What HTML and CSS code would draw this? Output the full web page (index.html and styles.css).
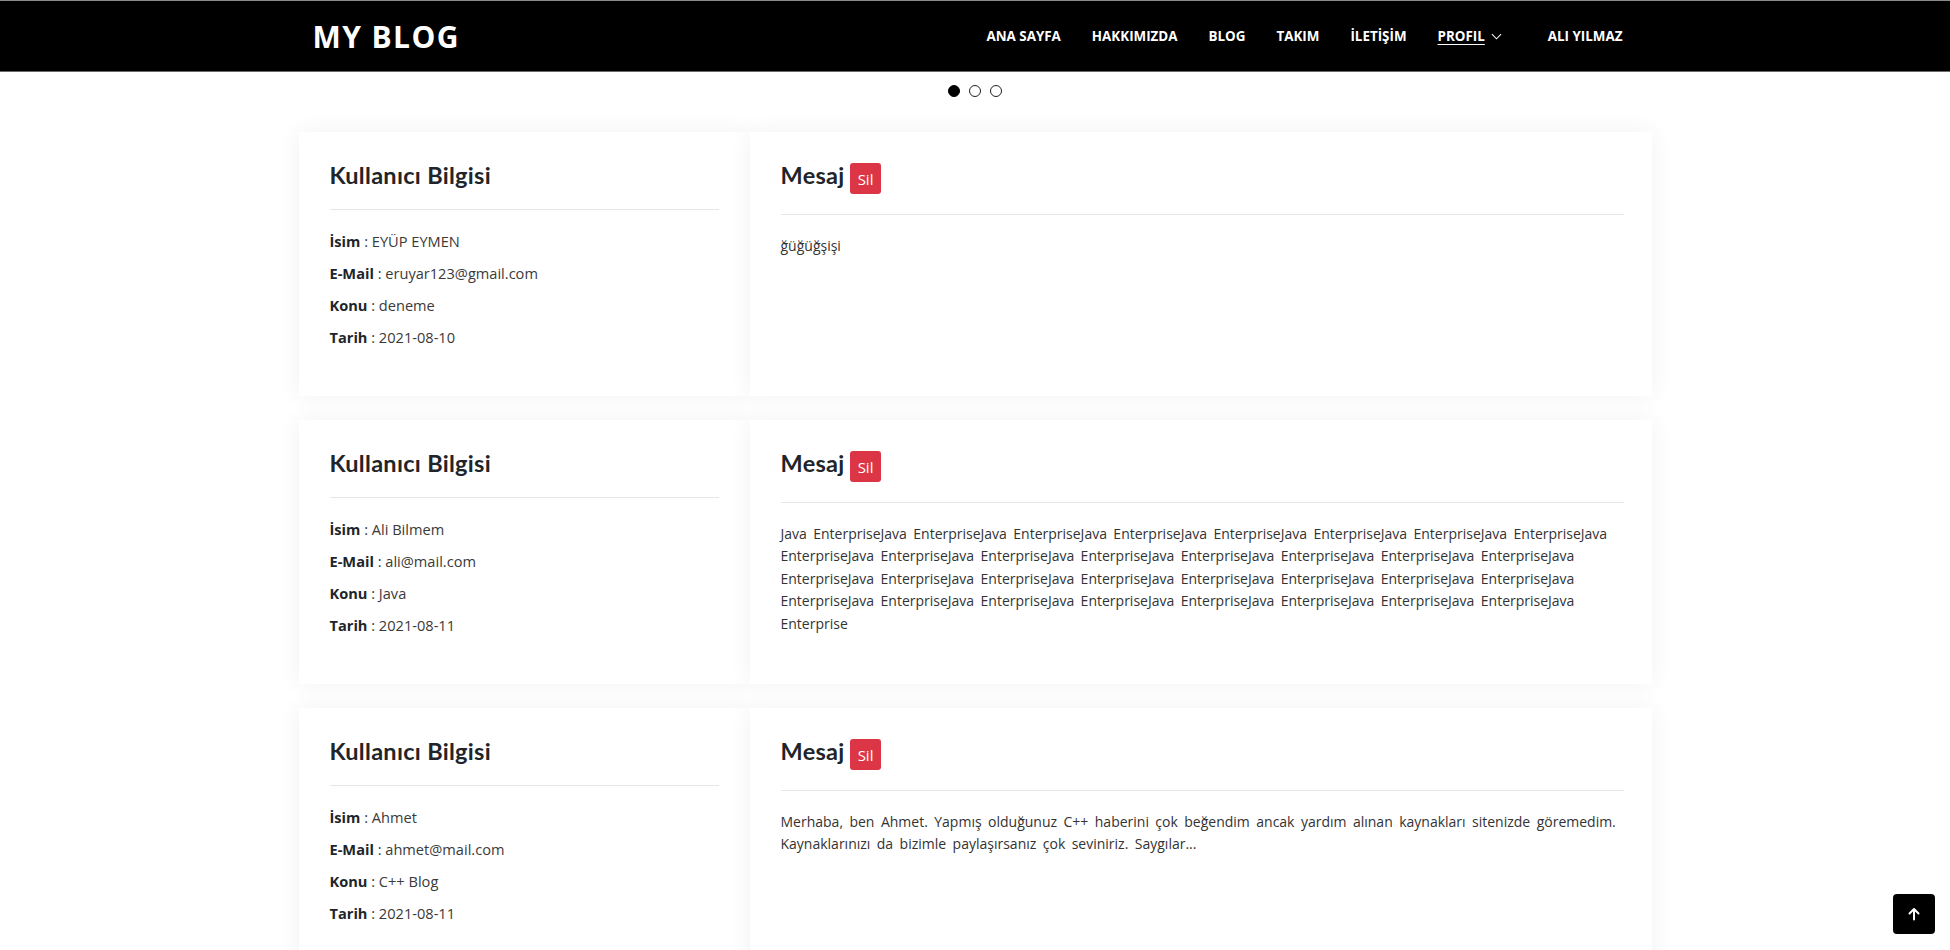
FILE: index.html
```html
<!DOCTYPE html>
<html lang="tr">
<head>
<meta charset="utf-8">
<title>My Blog - Mesajlar</title>
<link rel="stylesheet" href="styles.css">
</head>
<body>
<header class="topbar">
  <div class="topbar-inner">
    <a class="brand" href="#">MY BLOG</a>
    <nav class="nav">
      <a href="#">ANA SAYFA</a>
      <a href="#">HAKKIMIZDA</a>
      <a href="#">BLOG</a>
      <a href="#">TAKIM</a>
      <a href="#">İLETİŞİM</a>
      <a href="#" class="dropdown"><span class="active">PROFIL</span><svg class="chev" viewBox="0 0 12 7" width="11" height="7"><path d="M1 1l5 5 5-5" fill="none" stroke="#fff" stroke-width="1.1"/></svg></a>
      <a href="#" class="user">ALI YILMAZ</a>
    </nav>
  </div>
</header>

<div class="dots">
  <span class="dot on"></span><span class="dot"></span><span class="dot"></span>
</div>

<main class="list">
  <section class="msg-card">
    <div class="info">
      <h2>Kullanıcı Bilgisi</h2>
      <hr>
      <p><b>İsim</b> : EYÜP EYMEN</p>
      <p><b>E-Mail</b> : eruyar123@gmail.com</p>
      <p><b>Konu</b> : deneme</p>
      <p><b>Tarih</b> : 2021-08-10</p>
    </div>
    <div class="message">
      <div class="msg-head"><h2>Mesaj</h2><button class="btn-del">Sil</button></div>
      <hr>
      <p>ğüğüğşişi</p>
    </div>
  </section>

  <section class="msg-card">
    <div class="info">
      <h2>Kullanıcı Bilgisi</h2>
      <hr>
      <p><b>İsim</b> : Ali Bilmem</p>
      <p><b>E-Mail</b> : ali@mail.com</p>
      <p><b>Konu</b> : Java</p>
      <p><b>Tarih</b> : 2021-08-11</p>
    </div>
    <div class="message">
      <div class="msg-head"><h2>Mesaj</h2><button class="btn-del">Sil</button></div>
      <hr>
      <p>Java EnterpriseJava EnterpriseJava EnterpriseJava EnterpriseJava EnterpriseJava EnterpriseJava EnterpriseJava EnterpriseJava EnterpriseJava EnterpriseJava EnterpriseJava EnterpriseJava EnterpriseJava EnterpriseJava EnterpriseJava EnterpriseJava EnterpriseJava EnterpriseJava EnterpriseJava EnterpriseJava EnterpriseJava EnterpriseJava EnterpriseJava EnterpriseJava EnterpriseJava EnterpriseJava EnterpriseJava EnterpriseJava EnterpriseJava EnterpriseJava EnterpriseJava EnterpriseJava Enterprise</p>
    </div>
  </section>

  <section class="msg-card">
    <div class="info">
      <h2>Kullanıcı Bilgisi</h2>
      <hr>
      <p><b>İsim</b> : Ahmet</p>
      <p><b>E-Mail</b> : ahmet@mail.com</p>
      <p><b>Konu</b> : C++ Blog</p>
      <p><b>Tarih</b> : 2021-08-11</p>
    </div>
    <div class="message">
      <div class="msg-head"><h2>Mesaj</h2><button class="btn-del">Sil</button></div>
      <hr>
      <p>Merhaba, ben Ahmet. Yapmış olduğunuz C++ haberini çok beğendim ancak yardım alınan kaynakları sitenizde göremedim. Kaynaklarınızı da bizimle paylaşırsanız çok seviniriz. Saygılar...</p>
    </div>
  </section>
</main>

<a class="to-top" href="#" aria-label="Yukarı">
  <svg viewBox="0 0 16 16" width="16" height="16"><path d="M8 13.5V3M3.5 7.5L8 3l4.5 4.5" fill="none" stroke="#fff" stroke-width="2" stroke-linecap="round" stroke-linejoin="round"/></svg>
</a>
</body>
</html>
```

FILE: styles.css
```css
* { box-sizing: border-box; }
body {
  margin: 0;
  background: #fff;
  font-family: "Open Sans", "Liberation Sans", sans-serif;
  color: #212529;
}
a { text-decoration: none; color: inherit; }

.topbar {
  height: 72px;
  background: #000;
  border-top: 1px solid #8a8a8a;
  border-bottom: 1px solid #6a6a6a;
}
.topbar-inner {
  width: 1353px;
  height: 100%;
  margin: 0 auto;
  padding: 0 29px 0 14px;
  display: flex;
  align-items: center;
  justify-content: space-between;
}
.brand {
  color: #fff;
  font-family: "Open Sans", sans-serif;
  font-weight: 700;
  font-size: 30px;
  letter-spacing: 1.4px;
}
.nav {
  display: flex;
  align-items: center;
  gap: 31px;
  color: #fff;
  font-family: "Open Sans", sans-serif;
  font-weight: 700;
  font-size: 13.4px;
}
.nav .dropdown { display: flex; align-items: center; gap: 6px; }
.nav .active { text-decoration: underline; text-underline-offset: 3px; }
.nav .chev { margin-top: 1px; }
.nav .user { margin-left: 15px; }

.dots {
  display: flex;
  justify-content: center;
  gap: 9px;
  padding-top: 13px;
}
.dot {
  width: 12px;
  height: 12px;
  border-radius: 50%;
  border: 1.5px solid #222;
}
.dot.on { background: #000; border-color: #000; }

.list {
  width: 1353px;
  margin: 35px auto 0;
  display: flex;
  flex-direction: column;
  gap: 24px;
}
.msg-card { display: flex; }
.info, .message {
  background: #fff;
  box-shadow: 0 0 22px rgba(0, 0, 0, 0.06);
}
.info {
  width: 451px;
  padding: 29px 31px 47px;
}
.message {
  flex: 1;
  padding: 29px 28px 29px 31px;
}
h2 {
  margin: 0;
  font-family: "Lato", sans-serif;
  font-weight: 700;
  font-size: 23.5px;
  letter-spacing: 0.3px;
  line-height: 28px;
  color: #212529;
}
hr {
  border: 0;
  border-top: 1px solid #e6e6e6;
  margin: 20px 0 19px;
}
.info p {
  margin: 0 0 8px;
  font-size: 14.6px;
  line-height: 24px;
  color: #3a3a3a;
}
.info p:last-child { margin-bottom: 0; }
.info b { color: #212529; font-weight: 700; }
.msg-head { display: flex; align-items: flex-start; }
.btn-del {
  margin: 2px 0 0 5px;
  height: 31px;
  padding: 0 8px;
  border: 0;
  border-radius: 3px;
  background: #dc3545;
  color: #fff;
  font-family: "Open Sans", sans-serif;
  font-size: 15px;
}
.message hr { margin-bottom: 20px; }
.message p {
  margin: 0;
  font-size: 14px;
  word-spacing: 2.8px;
  line-height: 22.4px;
  color: #333;
}
.to-top {
  position: fixed;
  right: 15px;
  bottom: 16px;
  width: 42px;
  height: 40px;
  border-radius: 4px;
  background: #000;
  display: flex;
  align-items: center;
  justify-content: center;
}
```
